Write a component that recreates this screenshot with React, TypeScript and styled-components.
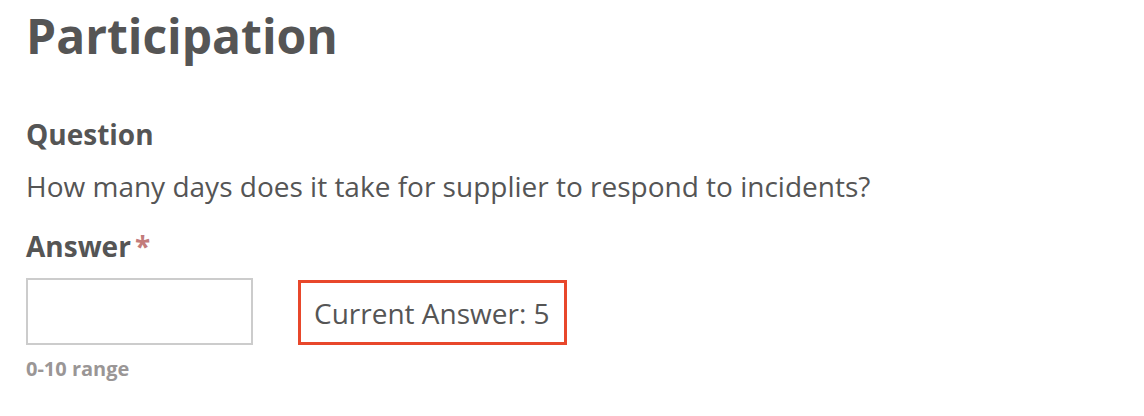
import React from 'react';
import styled, { createGlobalStyle } from 'styled-components';

const GlobalStyle = createGlobalStyle`
  body {
    margin: 0;
    background: #ffffff;
    font-family: 'Open Sans', 'Liberation Sans', sans-serif;
    color: #555555;
  }
`;

const Page = styled.div`
  padding: 3px 26px 0;
`;

const Title = styled.h1`
  margin: 0;
  font-size: 48px;
  font-weight: 700;
  line-height: 66px;
  color: #555555;
`;

const Section = styled.div<{ $gap: number }>`
  margin-top: ${p => p.$gap}px;
`;

const Label = styled.div`
  font-size: 28px;
  font-weight: 700;
  line-height: 38px;
  color: #555555;
`;

const Text = styled.p`
  margin: 14px 0 0;
  font-size: 28px;
  line-height: 38px;
  color: #555555;
`;

const Required = styled.span`
  color: #c27b7b;
  margin-left: 4px;
`;

const AnswerRow = styled.div`
  display: flex;
  align-items: flex-start;
  gap: 45px;
  margin-top: 13px;
`;

const Field = styled.div`
  display: flex;
  flex-direction: column;
`;

const Input = styled.input`
  box-sizing: border-box;
  width: 227px;
  height: 67px;
  margin: 0;
  border: 2px solid #cccccc;
  font-family: inherit;
  font-size: 28px;
  padding: 0 12px;
  outline: none;
`;

const Hint = styled.div`
  margin-top: 10px;
  font-size: 20px;
  line-height: 28px;
  font-weight: 700;
  color: #9a9696;
`;

const CurrentAnswer = styled.div<{ $highlight?: boolean }>`
  box-sizing: border-box;
  height: 65px;
  margin-top: 2px;
  padding: 0 14px 0 13px;
  display: flex;
  align-items: center;
  border: 3.5px solid ${p => (p.$highlight ? '#e8472b' : 'transparent')};
  font-size: 28px;
  color: #555555;
`;

export default function App() {
  return (
    <>
      <GlobalStyle />
      <Page>
        <Title>Participation</Title>
        <Section $gap={46}>
          <Label>Question</Label>
          <Text>How many days does it take for supplier to respond to incidents?</Text>
        </Section>
        <Section $gap={22}>
          <Label>
            Answer<Required>*</Required>
          </Label>
          <AnswerRow>
            <Field>
              <Input type="text" />
              <Hint>0-10 range</Hint>
            </Field>
            <CurrentAnswer $highlight>Current Answer: 5</CurrentAnswer>
          </AnswerRow>
        </Section>
      </Page>
    </>
  );
}
